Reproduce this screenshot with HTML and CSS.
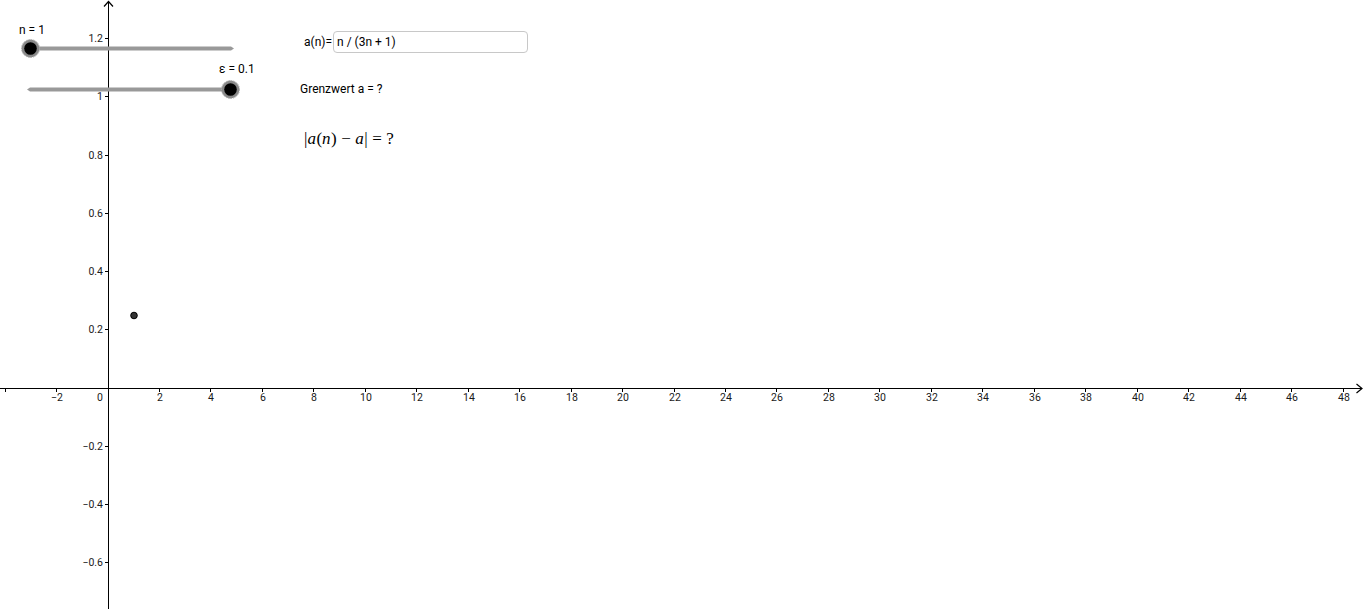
FILE: index.html
```html
<!DOCTYPE html>
<html lang="de">
<head>
<meta charset="utf-8">
<title>Folge a(n) = n / (3n + 1)</title>
<link rel="stylesheet" href="styles.css">
</head>
<body>
<div class="canvas">
  <svg class="graph" width="1366" height="609" viewBox="0 0 1366 609" xmlns="http://www.w3.org/2000/svg">
    <!-- axes -->
    <g class="axis" shape-rendering="crispEdges">
      <line x1="0" y1="388.5" x2="1362" y2="388.5"/>
      <line x1="108.5" y1="2" x2="108.5" y2="609"/>
    </g>
    <g class="arrow">
      <polyline points="104,6.5 108.5,1.5 113,6.5"/>
      <polyline points="1356.5,384 1362,388.5 1356.5,393"/>
    </g>
    <!-- x ticks -->
    <g class="axis" shape-rendering="crispEdges">
      <line x1="5.5" y1="389" x2="5.5" y2="392"/>
      <line x1="56.5" y1="389" x2="56.5" y2="392"/>
      <line x1="159.5" y1="389" x2="159.5" y2="392"/>
      <line x1="210.5" y1="389" x2="210.5" y2="392"/>
      <line x1="262.5" y1="389" x2="262.5" y2="392"/>
      <line x1="313.5" y1="389" x2="313.5" y2="392"/>
      <line x1="365.5" y1="389" x2="365.5" y2="392"/>
      <line x1="416.5" y1="389" x2="416.5" y2="392"/>
      <line x1="468.5" y1="389" x2="468.5" y2="392"/>
      <line x1="519.5" y1="389" x2="519.5" y2="392"/>
      <line x1="571.5" y1="389" x2="571.5" y2="392"/>
      <line x1="622.5" y1="389" x2="622.5" y2="392"/>
      <line x1="674.5" y1="389" x2="674.5" y2="392"/>
      <line x1="725.5" y1="389" x2="725.5" y2="392"/>
      <line x1="776.5" y1="389" x2="776.5" y2="392"/>
      <line x1="828.5" y1="389" x2="828.5" y2="392"/>
      <line x1="879.5" y1="389" x2="879.5" y2="392"/>
      <line x1="931.5" y1="389" x2="931.5" y2="392"/>
      <line x1="982.5" y1="389" x2="982.5" y2="392"/>
      <line x1="1034.5" y1="389" x2="1034.5" y2="392"/>
      <line x1="1085.5" y1="389" x2="1085.5" y2="392"/>
      <line x1="1137.5" y1="389" x2="1137.5" y2="392"/>
      <line x1="1188.5" y1="389" x2="1188.5" y2="392"/>
      <line x1="1240.5" y1="389" x2="1240.5" y2="392"/>
      <line x1="1291.5" y1="389" x2="1291.5" y2="392"/>
      <line x1="1343.5" y1="389" x2="1343.5" y2="392"/>
    </g>
    <!-- y ticks -->
    <g class="axis" shape-rendering="crispEdges">
      <line x1="105" y1="38.5" x2="108" y2="38.5"/>
      <line x1="105" y1="96.5" x2="108" y2="96.5"/>
      <line x1="105" y1="155.5" x2="108" y2="155.5"/>
      <line x1="105" y1="213.5" x2="108" y2="213.5"/>
      <line x1="105" y1="271.5" x2="108" y2="271.5"/>
      <line x1="105" y1="329.5" x2="108" y2="329.5"/>
      <line x1="105" y1="446.5" x2="108" y2="446.5"/>
      <line x1="105" y1="504.5" x2="108" y2="504.5"/>
      <line x1="105" y1="562.5" x2="108" y2="562.5"/>
    </g>
    <!-- x labels -->
    <g class="ticklabel xl">
      <text x="57" y="401">−2</text>
      <text x="100" y="401">0</text>
      <text x="160" y="401">2</text>
      <text x="211" y="401">4</text>
      <text x="263" y="401">6</text>
      <text x="314" y="401">8</text>
      <text x="366" y="401">10</text>
      <text x="417" y="401">12</text>
      <text x="469" y="401">14</text>
      <text x="520" y="401">16</text>
      <text x="572" y="401">18</text>
      <text x="623" y="401">20</text>
      <text x="675" y="401">22</text>
      <text x="726" y="401">24</text>
      <text x="777" y="401">26</text>
      <text x="829" y="401">28</text>
      <text x="880" y="401">30</text>
      <text x="932" y="401">32</text>
      <text x="983" y="401">34</text>
      <text x="1035" y="401">36</text>
      <text x="1086" y="401">38</text>
      <text x="1138" y="401">40</text>
      <text x="1189" y="401">42</text>
      <text x="1241" y="401">44</text>
      <text x="1292" y="401">46</text>
      <text x="1344" y="401">48</text>
    </g>
    <!-- y labels -->
    <g class="ticklabel yl">
      <text x="103" y="42">1.2</text>
      <text x="103" y="100">1</text>
      <text x="103" y="159">0.8</text>
      <text x="103" y="217">0.6</text>
      <text x="103" y="275">0.4</text>
      <text x="103" y="333">0.2</text>
      <text x="103" y="450">−0.2</text>
      <text x="103" y="508">−0.4</text>
      <text x="103" y="566">−0.6</text>
    </g>
    <!-- sequence point a(1) = 0.25 -->
    <circle class="point" cx="134" cy="315.5" r="3.3"/>
    <!-- slider n -->
    <g class="slider">
      <polygon class="track" points="30,46.5 231,46.5 234,48.5 231,50.5 30,50.5"/>
      <circle class="halo" cx="30.5" cy="48.5" r="9"/>
      <circle class="knob" cx="30.5" cy="48.5" r="6.3"/>
    </g>
    <!-- slider epsilon -->
    <g class="slider">
      <polygon class="track" points="27,89.5 30,87.5 231,87.5 231,91.5 30,91.5"/>
      <circle class="halo" cx="230.5" cy="89.5" r="9"/>
      <circle class="knob" cx="230.5" cy="89.5" r="6.3"/>
    </g>
  </svg>

  <div class="obj slider-label label-n">n = 1</div>
  <div class="obj slider-label label-eps">ε = 0.1</div>

  <div class="obj input-field">
    <span class="input-caption">a(n)=</span>
    <span class="input-box">n / (3n + 1)</span>
  </div>

  <div class="obj text-grenz">Grenzwert a = ?</div>

  <div class="obj formula"><span class="bar">|</span><i>a</i>(<i>n</i>)<span class="op">−</span><i>a</i><span class="bar">|</span><span class="op">=</span>?</div>
</div>
</body>
</html>
```

FILE: styles.css
```css
html, body {
  margin: 0;
  padding: 0;
  background: #ffffff;
  overflow: hidden;
}

.canvas {
  position: relative;
  width: 1366px;
  height: 609px;
  background: #ffffff;
  font-family: Roboto, "Liberation Sans", sans-serif;
  color: #000;
}

.graph {
  position: absolute;
  left: 0;
  top: 0;
  display: block;
}

.axis line {
  stroke: #000;
  stroke-width: 1;
}

.arrow polyline {
  fill: none;
  stroke: #000;
  stroke-width: 1.2;
}

.ticklabel text {
  font-family: Roboto, "Liberation Sans", sans-serif;
  font-size: 10.5px;
  fill: #1a1a1a;
}

.xl text {
  text-anchor: middle;
}

.yl text {
  text-anchor: end;
}

.point {
  fill: #333333;
  stroke: #000;
  stroke-width: 1;
}

.slider .track {
  fill: #999999;
}

.slider .halo {
  fill: #8a8a8a;
  stroke: #b0b0b0;
  stroke-width: 1;
  stroke-dasharray: 1.5 1;
}

.slider .knob {
  fill: #000;
}

.obj {
  position: absolute;
  white-space: nowrap;
  font-size: 12px;
  line-height: 14px;
}

.label-n {
  left: 19px;
  top: 23px;
}

.label-eps {
  left: 219px;
  top: 62px;
}

.input-field {
  left: 304px;
  top: 31px;
  display: flex;
  align-items: center;
}

.input-caption {
  margin-right: 1px;
}

.input-box {
  box-sizing: border-box;
  width: 195px;
  height: 22px;
  border: 1px solid #c8c8c8;
  border-radius: 4px;
  padding: 0 3px;
  line-height: 20px;
}

.text-grenz {
  left: 300px;
  top: 82px;
}

.formula {
  left: 304px;
  top: 130px;
  font-family: "Liberation Serif", serif;
  font-size: 17px;
  line-height: 18px;
}

.formula i {
  font-family: "Liberation Serif", serif;
  padding-right: 0.5px;
}

.formula .op {
  margin: 0 4.5px;
}
```
